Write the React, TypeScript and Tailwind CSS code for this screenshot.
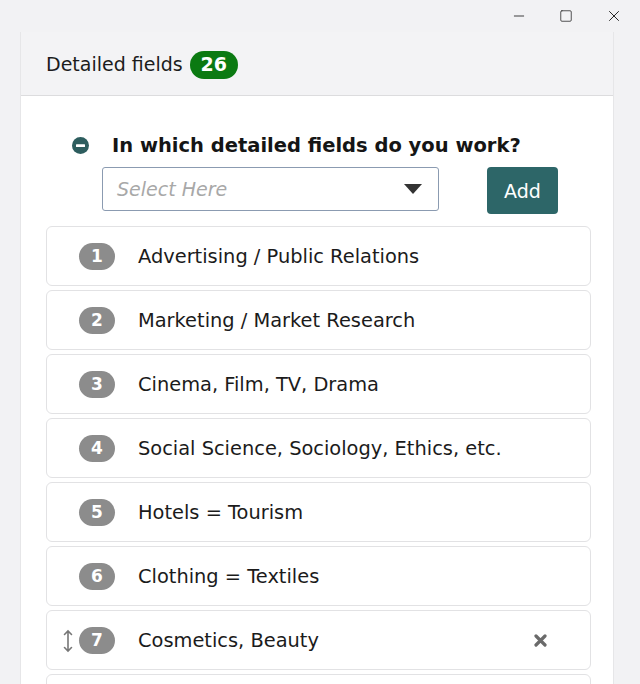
import { X, Minus, Square } from "lucide-react"

const fields = [
  "Advertising / Public Relations",
  "Marketing / Market Research",
  "Cinema, Film, TV, Drama",
  "Social Science, Sociology, Ethics, etc.",
  "Hotels = Tourism",
  "Clothing = Textiles",
  "Cosmetics, Beauty",
  "",
]

function FieldRow({ n, label, active }: { n: number; label: string; active?: boolean }) {
  return (
    <div className="relative flex h-[60px] shrink-0 items-center rounded-md border border-[#e2e2e4] bg-white">
      {active && (
        <svg className="absolute left-[16px] top-[18px]" width="10" height="24" viewBox="0 0 10 24">
          <path d="M5 2 L5 22 M1.5 5.5 L5 2 L8.5 5.5 M1.5 18.5 L5 22 L8.5 18.5" stroke="#777" strokeWidth="1.6" fill="none" strokeLinecap="round" />
        </svg>
      )}
      <span className="ml-[32px] flex h-[27px] w-[36px] items-center justify-center rounded-full bg-[#8c8c8c] text-[17px] font-bold text-white">
        {label ? n : ""}
      </span>
      <span className="ml-[23px] text-[19.4px] text-[#1b1b1b]">{label}</span>
      {active && (
        <svg className="absolute left-[487px] top-[23px]" width="13" height="13" viewBox="0 0 13 13">
          <path d="M2 2 L11 11 M11 2 L2 11" stroke="#6a6a6a" strokeWidth="3.2" strokeLinecap="round" />
        </svg>
      )}
    </div>
  )
}

export default function App() {
  return (
    <div className="flex h-[684px] w-[640px] flex-col overflow-hidden bg-[#f2f2f4] font-['DejaVu_Sans',sans-serif]">
      {/* window controls */}
      <div className="flex h-[32px] shrink-0 items-center justify-end gap-[32px] pr-[17px] text-[#222]">
        <Minus size={16} strokeWidth={1.3} />
        <Square size={14} strokeWidth={1.3} />
        <X size={18} strokeWidth={1.3} />
      </div>

      <div className="ml-[20px] flex w-[594px] flex-1 flex-col border-l border-r border-[#e6e6e8] bg-white">
        <div className="flex h-[64px] shrink-0 items-center gap-[7px] border-b border-[#dcdcde] bg-[#f3f3f5] pl-[25px] pt-[2px]">
          <span className="text-[19px] text-[#1c1c1c]">Detailed fields</span>
          <span className="flex h-[28px] w-[48px] items-center justify-center rounded-full bg-[#0b7a12] text-[19px] font-bold text-white">
            26
          </span>
        </div>

        <div className="flex flex-col px-[25px] pt-[35px]">
          <div className="flex items-center pl-[26px]">
            <svg width="17" height="17" viewBox="0 0 17 17">
              <circle cx="8.5" cy="8.5" r="8.5" fill="#2d5d5e" />
              <rect x="4" y="7.2" width="9" height="2.8" rx="0.5" fill="white" />
            </svg>
            <span className="ml-[23px] text-[19.5px] font-bold text-[#151515]">
              In which detailed fields do you work?
            </span>
          </div>

          <div className="mt-[7px] flex items-start pl-[56px]">
            <div className="flex h-[44px] w-[337px] items-center justify-between rounded-[3px] border border-[#8b9bb1] bg-white pl-[14px] pr-[16px]">
              <span className="text-[19px] italic text-[#a8a8a8]">Select Here</span>
              <svg width="18" height="10" viewBox="0 0 18 10">
                <path d="M0 0 L18 0 L9 10 Z" fill="#333" />
              </svg>
            </div>
            <button className="ml-[48px] flex h-[47px] w-[71px] items-center justify-center rounded-[4px] bg-[#2d6668] text-[19px] text-white">
              Add
            </button>
          </div>

          <div className="mt-[12px] flex w-[545px] flex-col gap-[4px]">
            {fields.map((f, i) => (
              <FieldRow key={i} n={i + 1} label={f} active={i === 6} />
            ))}
          </div>
        </div>
      </div>
    </div>
  )
}
